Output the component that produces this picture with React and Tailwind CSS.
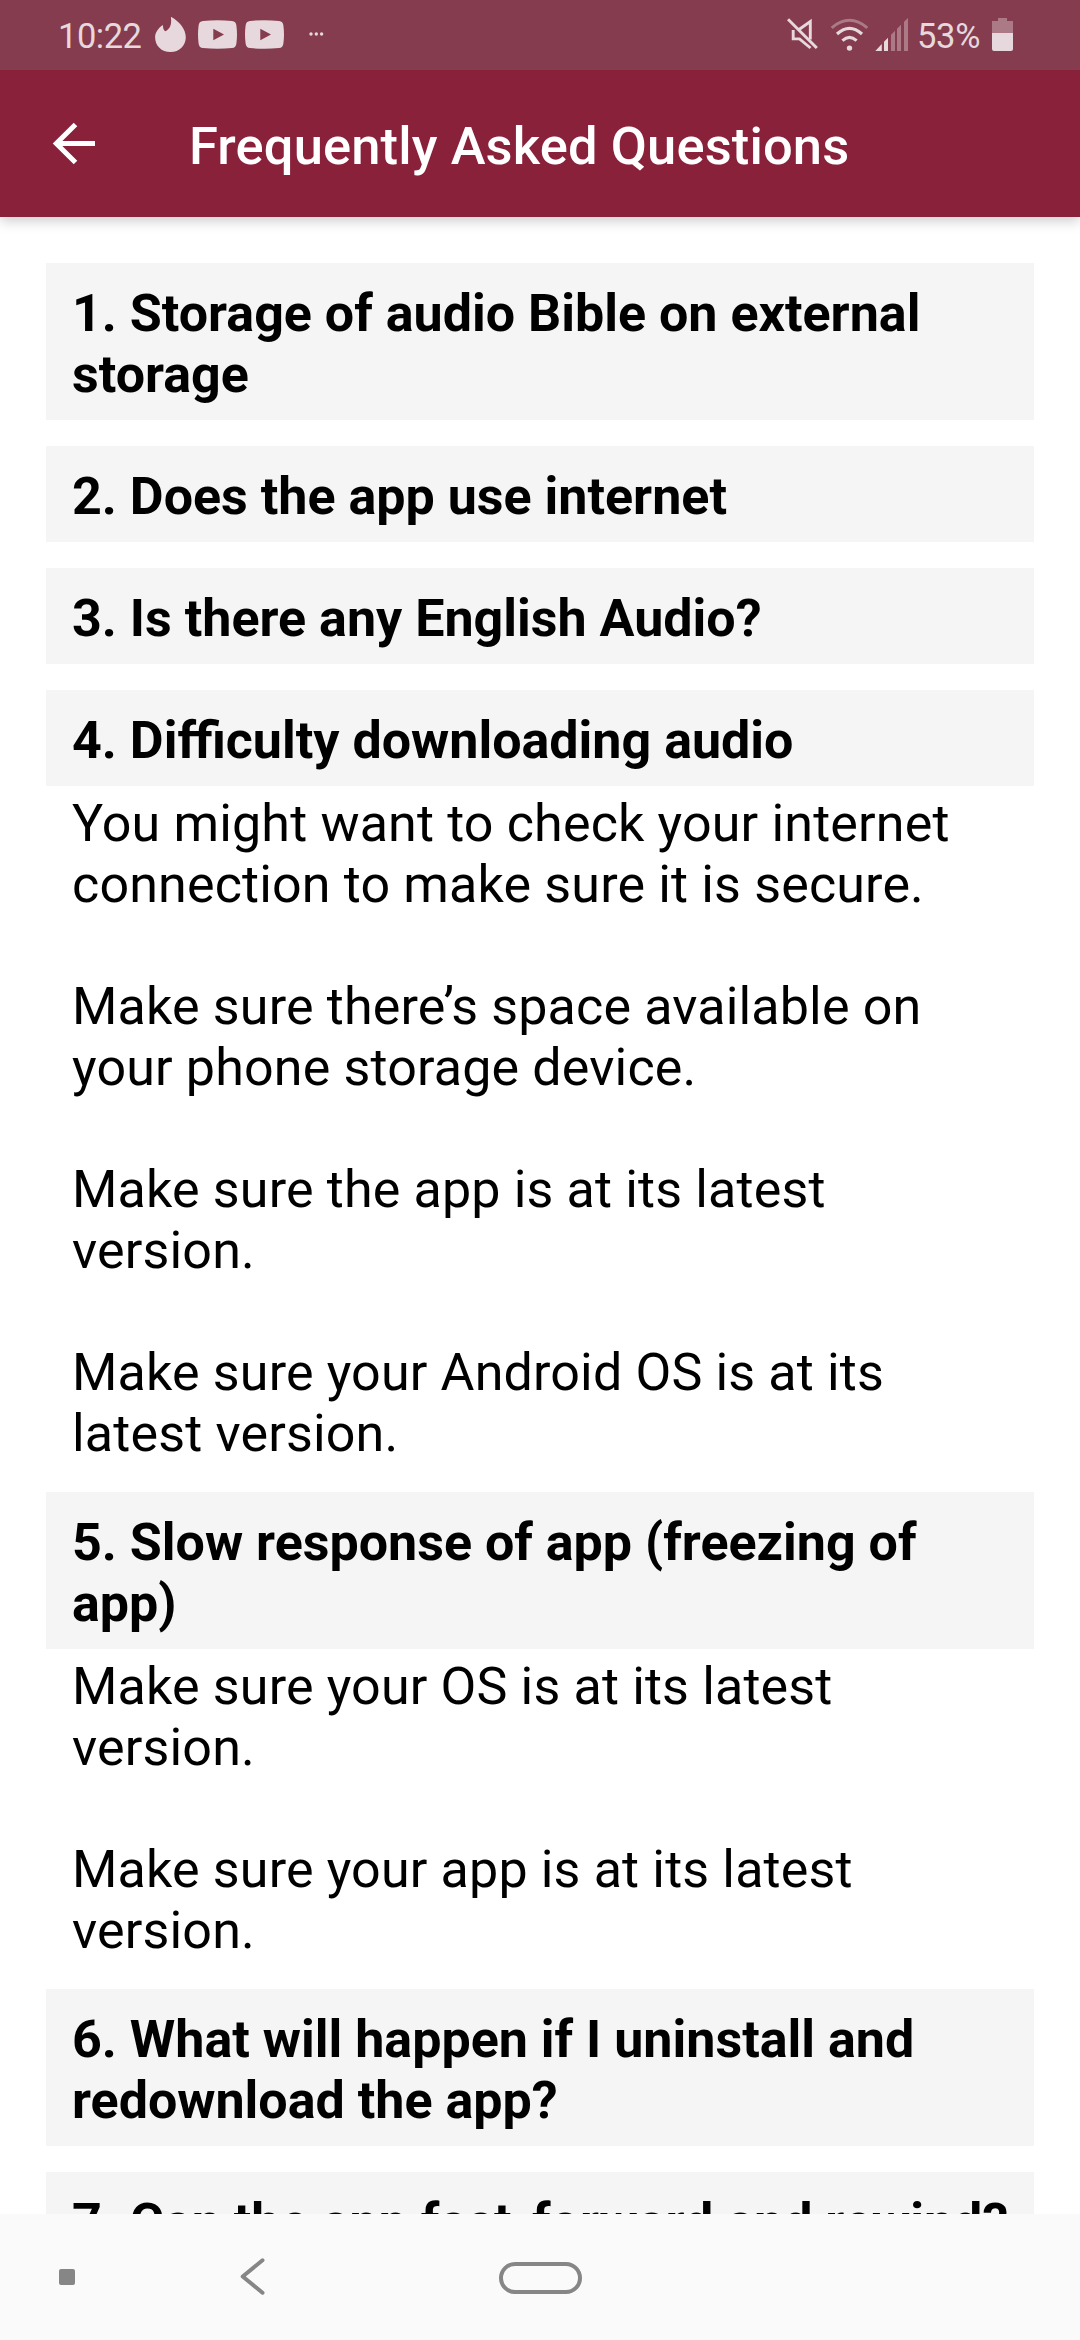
const faqs = [
  { title: ["1. Storage of audio Bible on external", "storage"] },
  { title: ["2. Does the app use internet"] },
  { title: ["3. Is there any English Audio?"] },
  {
    title: ["4. Difficulty downloading audio"],
    body: [
      ["You might want to check your internet", "connection to make sure it is secure."],
      ["Make sure there’s space available on", "your phone storage device."],
      ["Make sure the app is at its latest", "version."],
      ["Make sure your Android OS is at its", "latest version."],
    ],
  },
  {
    title: ["5. Slow response of app (freezing of", "app)"],
    body: [
      ["Make sure your OS is at its latest", "version."],
      ["Make sure your app is at its latest", "version."],
    ],
  },
  { title: ["6. What will happen if I uninstall and", "redownload the app?"] },
  { title: ["7. Can the app fast-forward and rewind?"] },
];

function YouTubeIcon() {
  return (
    <svg className="h-[29px] w-[39px]" viewBox="0 0 39 29" fill="currentColor" fillRule="evenodd">
      <path d="M5 .9Q19.500-.5 34 .9Q38 1.300 38.400 5.500Q39.600 14.500 38.400 23.500Q38 27.700 34 28.100Q19.500 29.500 5 28.100Q1 27.700.6 23.500Q-.6 14.500.6 5.500Q1 1.300 5 .9ZM15.300 8.700V20.300L26 14.500Z" />
    </svg>
  );
}

function StatusBar() {
  return (
    <div className="relative z-20 flex h-[70px] shrink-0 items-start bg-[#843c4e] pl-[58px] text-[34.500px] leading-[41px] text-[#e6d8dc]">
      <span className="mt-4 w-[97px] whitespace-nowrap tracking-[-0.5px]">10:22</span>
      <svg className="mt-[17px] h-[35px] w-[31px]" viewBox="0 0 31 35" fill="currentColor">
        <path d="M16.300 0C24.500 4.500 30.800 12 30.800 20.200C30.800 28.600 24.500 35 15.500 35C6.500 35 .1 28.800.1 20.200C.1 15.500 3.200 11.500 7.300 8.300C7.700 8 8 8.200 8 8.700C8 11 8.600 13 10.200 14.200C14.800 12.500 17 7.500 15.900.5C15.900.1 16 0 16.300 0Z" />
      </svg>
      <div className="mt-5 ml-3 flex gap-2">
        <YouTubeIcon />
        <YouTubeIcon />
      </div>
      <svg className="mt-8 ml-[25px] h-1 w-[15px]" viewBox="0 0 15 4" fill="currentColor">
        <circle cx="2" cy="2" r="1.700" />
        <circle cx="7.300" cy="2" r="1.700" />
        <circle cx="12.600" cy="2" r="1.700" />
      </svg>
      <svg className="mt-[18px] ml-[463px] h-8 w-[31px]" viewBox="0 0 31 32" fill="none" stroke="currentColor">
        <path d="M1 1.200L29.800 30" strokeWidth="3" />
        <path d="M12 11.500L23.300 3.500V21.500M6.200 12V20.900H12.500L23.500 30" strokeWidth="2.900" />
      </svg>
      <svg className="mt-[18px] ml-[12px] h-[34px] w-[39px]" viewBox="0 0 39 34" fill="none" stroke="currentColor">
        <path d="M1.700 9.800Q19.500-5.300 37.300 9.800" strokeWidth="3" opacity=".4" />
        <path d="M7 16Q19.500 4.800 32 16" strokeWidth="3.200" />
        <path d="M12.400 22.600Q19.500 16.200 26.600 22.600" strokeWidth="3.200" />
        <circle cx="19.500" cy="30.100" r="2.700" fill="currentColor" stroke="none" />
      </svg>
      <svg className="mt-[18px] ml-[6px] h-[33px] w-[33px]" viewBox="0 0 33 33" fill="currentColor">
        <path d="M.3 33L6.800 26V33ZM9 23.700L13 19.700V33H9Z" />
        <path d="M16 16.700L20 12.700V33H16ZM22 10.700L26 6.700V33H22ZM29 3.700L33 0V33H29Z" opacity=".4" />
      </svg>
      <span className="mt-4 ml-[9px] w-[75px] whitespace-nowrap tracking-[-0.3px]">53%</span>
      <svg className="mt-[18px] h-[33px] w-[21px]" viewBox="0 0 21 33" fill="currentColor">
        <path d="M6 0H15V3H21V15H0V3H6Z" opacity=".4" />
        <path d="M0 15H21V31Q21 33 19 33H2Q0 33 0 31Z" />
      </svg>
    </div>
  );
}

function Lines({ lines }) {
  return lines.map((line) => (
    <span key={line} className="block whitespace-nowrap">
      {line}
    </span>
  ));
}

export default function App() {
  return (
    <div className="flex h-[2340px] w-[1080px] flex-col overflow-hidden bg-white font-['Roboto',sans-serif] text-black">
      <StatusBar />
      <header className="z-10 flex h-[147px] shrink-0 items-start bg-[#89213a] pl-[52px] text-white shadow-[0_4px_12px_rgba(0,0,0,0.2)]">
        <svg className="mt-[52px] h-[43px] w-[43px]" viewBox="0 0 43 43" fill="none" stroke="currentColor" strokeWidth="5">
          <path d="M23.500 2.500L4.300 21.500L23.500 40.500M4.300 21.500H43" />
        </svg>
        <h1 className="mt-[46px] ml-[94px] text-[52.500px] leading-[61px] font-medium tracking-[0.12px] whitespace-nowrap">
          Frequently Asked Questions
        </h1>
      </header>
      <main className="min-h-0 flex-1 overflow-hidden px-[46px] pt-[46px] text-[52px] leading-[61px]">
        {faqs.map(({ title, body }) => (
          <section key={title[0]}>
            <h2 className="bg-[#f5f5f5] px-[26px] pt-[20px] pb-[15px] font-bold">
              <Lines lines={title} />
            </h2>
            {body ? (
              <div className="flex flex-col gap-[61px] px-[26px] pt-[7px] pb-[28px] tracking-[0.16px]">
                {body.map((lines) => (
                  <p key={lines[0]}>
                    <Lines lines={lines} />
                  </p>
                ))}
              </div>
            ) : (
              <div className="h-[26px]" />
            )}
          </section>
        ))}
      </main>
      <nav className="flex h-[126px] shrink-0 items-start bg-[#fafafa] pl-[59px] text-[#868686]">
        <div className="mt-[55px] size-4 rounded-[2px] bg-[#868686]" />
        <svg className="mt-[44px] ml-[165px] h-[37px] w-[25px]" viewBox="0 0 25 37" fill="none" stroke="currentColor" strokeWidth="4" strokeLinecap="round" strokeLinejoin="round">
          <path d="M22.500 2.300L2.700 18.500L22.500 34.700" />
        </svg>
        <div className="mt-[48px] ml-[234px] h-8 w-[83px] rounded-full border-[4.500px] border-[#868686]" />
      </nav>
    </div>
  );
}
